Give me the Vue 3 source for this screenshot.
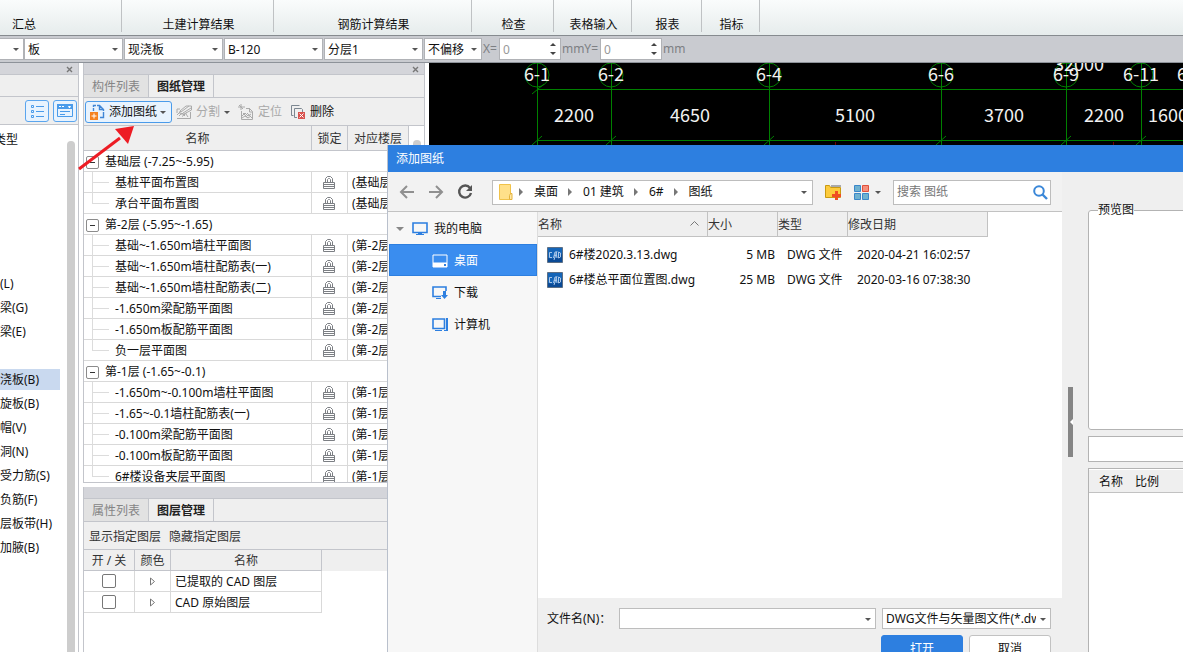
<script setup>
import { ref } from 'vue'

const ribbon = [
  { name: '汇总', size: 'w122' },
  { name: '土建计算结果', size: 'w152' },
  { name: '钢筋计算结果', size: 'w198' },
  { name: '检查', size: 'w82' },
  { name: '表格输入', size: 'w78' },
  { name: '报表', size: 'w70' },
  { name: '指标', size: 'w58' },
]
const combos = ['板', '现浇板', 'B-120', '分层1']

const members = [
  '', '', '', '', '', '(L)', '梁(G)', '梁(E)', '', '浇板(B)', '旋板(B)', '帽(V)',
  '洞(N)', '受力筋(S)', '负筋(F)', '层板带(H)', '加腋(B)',
]
const groups = [
  { title: '基础层 (-7.25~-5.95)', floor: '(基础层)', items: ['基桩平面布置图', '承台平面布置图'] },
  {
    title: '第-2层 (-5.95~-1.65)',
    floor: '(第-2层)',
    items: ['基础~-1.650m墙柱平面图', '基础~-1.650m墙柱配筋表(一)', '基础~-1.650m墙柱配筋表(二)', '-1.650m梁配筋平面图', '-1.650m板配筋平面图', '负一层平面图'],
  },
  {
    title: '第-1层 (-1.65~-0.1)',
    floor: '(第-1层)',
    items: ['-1.650m~-0.100m墙柱平面图', '-1.65~-0.1墙柱配筋表(一)', '-0.100m梁配筋平面图', '-0.100m板配筋平面图', '6#楼设备夹层平面图'],
  },
]
const layers = ['已提取的 CAD 图层', 'CAD 原始图层']
const axes = [
  { x: 108, label: '6-1' },
  { x: 182, label: '6-2' },
  { x: 340, label: '6-4' },
  { x: 512, label: '6-6' },
  { x: 637, label: '6-9' },
  { x: 712, label: '6-11' },
  { x: 766, label: '6-12' },
]
const spans = [
  { x: 145, v: '2200' }, { x: 261, v: '4650' }, { x: 426, v: '5100' },
  { x: 575, v: '3700' }, { x: 675, v: '2200' }, { x: 739, v: '1600' },
]
const crumbs = ['桌面', '01 建筑', '6#', '图纸']
const files = [
  { name: '6#楼2020.3.13.dwg', size: '5 MB', date: '2020-04-21 16:02:57' },
  { name: '6#楼总平面位置图.dwg', size: '25 MB', date: '2020-03-16 07:38:30' },
]
const fileName = ref('')
const search = ref('')
</script>

<template>
  <div class="app">
    <nav class="ribbon" aria-label="功能区">
      <div v-for="r in ribbon" :key="r.name" class="ribbon-group" :class="r.size">{{ r.name }}</div>
    </nav>

    <div class="options">
      <span class="combo stub"><select aria-label="楼层"><option></option></select></span>
      <span v-for="c in combos" :key="c" class="combo"><select :aria-label="c"><option>{{ c }}</option></select></span>
      <span class="combo small"><select aria-label="偏移"><option>不偏移</option></select></span>
      <label class="offset">X=<span class="spin"><input value="0" disabled /></span>mm</label>
      <label class="offset">Y=<span class="spin"><input value="0" disabled /></span>mm</label>
    </div>

    <main class="work">
      <aside class="members">
        <div class="dock-bar"><button class="close" aria-label="关闭">
          <svg width="7" height="7" viewBox="0 0 7 7"><path d="M1 1l5 5M6 1l-5 5" /></svg>
        </button></div>
        <div class="blank-bar"></div>
        <div class="view-bar">
          <button class="view-btn" aria-label="列表视图">
            <svg width="13" height="14" viewBox="0 0 13 14"><path class="bl" d="M.5 1.5h2v2h-2zM.5 6.500h2v2h-2zM.5 11.500h2v2h-2zM5 2.500h8M5 7.500h8M5 12.500h8" /></svg>
          </button>
          <button class="view-btn" aria-label="属性视图">
            <svg width="16" height="14" viewBox="0 0 16 14"><path class="bl" d="M.5.500h15v12h-15z" /><path class="bf" d="M0 0h16v5H0z" /><path d="M2 2h2v1H2zM5 2h2v1H5zM11 2h3l-1 2h-1z" fill="#fff" /><path class="bl" d="M3 7.500h10M3 10.500h5" /></svg>
          </button>
        </div>
        <div class="member-area">
          <ul class="member-list">
            <li class="type">类型</li>
            <li v-for="(m, i) in members" :key="i"><span :class="{ on: m === '浇板(B)' }">{{ m }}</span></li>
          </ul>
          <div class="thumb"></div>
        </div>
      </aside>

      <section class="center">
        <section class="dock drawings">
          <div class="dock-bar"><button class="close" aria-label="关闭">
            <svg width="7" height="7" viewBox="0 0 7 7"><path d="M1 1l5 5M6 1l-5 5" /></svg>
          </button></div>
          <div class="tabs"><button>构件列表</button><button class="active">图纸管理</button></div>
          <div class="tools">
            <button class="tool add">
              <svg width="16" height="16" viewBox="0 0 16 16"><path d="M3.500 7V4M3.500 3V1.500H6M7 1.500h2.500l4 4V7M9.500 1.500v4h4M13.500 8v5.500H10" fill="none" stroke="#3f86d6" stroke-width="1.400" /><path d="M0 8h8v8H0z" fill="#f58220" /><path d="M4 9.500v5M1.500 12h5" stroke="#fff" stroke-width="1" /></svg>
              添加图纸<i class="tri"></i>
            </button>
            <button class="tool dim">
              <svg width="16" height="16" viewBox="0 0 16 16"><path d="M4 5H1v4M1 14.500h13.500V8M3 12l3-3 3 3M1 11l4-4M6 12.500l5-4M12 13l-2-3M4 7l6-5h5.500v4L8 10H4zM5 8l8-6M7 9l8-5" /></svg>
              分割<i class="tri"></i>
            </button>
            <button class="tool dim locate">
              <svg width="16" height="16" viewBox="0 0 16 16"><path d="M3.500 7v8.500h11v-8l-3-3H8M11.500 4v4h3M0 3h7M3 0v6M1 1l4 4M4 12l3-3 3 3 3-2M4 14l3-2 3 2 3-2M5 9l5 5M9 9l5 5" /></svg>
              定位
            </button>
            <button class="tool">
              <svg width="15" height="15" viewBox="0 0 15 15"><path d="M2.500 10.500h-2v-10h8M6 12.500H3.500v-9h7l1 1V7" fill="none" stroke="#7c8791" /><path d="M7 7h7v7H7z" fill="#d9534f" /><path d="M8.500 8.500l4 4M12.500 8.500l-4 4" stroke="#fff" /></svg>
              删除
            </button>
          </div>
          <div class="scroll">
            <table class="grid">
              <thead><tr><th class="c-name">名称</th><th class="c-lock">锁定</th><th class="c-floor">对应楼层</th></tr></thead>
              <tbody v-for="g in groups" :key="g.title">
                <tr class="group"><td colspan="3"><span><button class="fold" aria-label="折叠"></button>{{ g.title }}</span></td></tr>
                <tr v-for="it in g.items" :key="it" class="leaf">
                  <td>{{ it }}</td>
                  <td class="lock"><svg width="12" height="13" viewBox="0 0 12 13"><path d="M2.500 6V2.500l2-2h3l2 2V6M4.500 6V3.500l1-1h1l1 1V6M.5 6.500h11v6H.5zM1 8.500h10M1 10.500h10" /></svg></td>
                  <td>{{ g.floor }}</td>
                </tr>
              </tbody>
            </table>
            <div class="rail"><div class="knob"></div></div>
          </div>
        </section>

        <section class="dock layers">
          <div class="dock-bar"></div>
          <div class="tabs"><button>属性列表</button><button class="active">图层管理</button></div>
          <div class="tools links"><button>显示指定图层</button><button>隐藏指定图层</button></div>
          <div class="layer-area">
            <table class="layer-table">
              <thead><tr><th class="l-on">开 / 关</th><th class="l-color">颜色</th><th class="l-name">名称</th></tr></thead>
              <tbody>
                <tr v-for="l in layers" :key="l">
                  <td><input type="checkbox" :aria-label="l" /></td>
                  <td><svg width="5" height="9" viewBox="0 0 5 9"><path d="M.5 1v7l4-3.500z" fill="none" stroke="#777" /></svg></td>
                  <td class="text">{{ l }}</td>
                </tr>
              </tbody>
            </table>
          </div>
        </section>
      </section>

      <section class="canvas">
        <svg width="100%" height="100%">
          <g fill="none" stroke="#008000">
            <path d="M108 26.500h1200M108 77.500h1200M103 31l12-10" />
            <g v-for="a in axes" :key="a.x">
              <path :d="`M${a.x + 0.5} 0v90M${a.x - 5} 82l10-9`" />
              <circle :cx="a.x" cy="12" r="12" />
            </g>
            <path d="M406.500 79v10M684.500 79v10" stroke="#700000" />
          </g>
          <g class="dims">
            <text v-for="a in axes" :key="a.label" :x="a.x" y="18">{{ a.label }}</text>
            <text v-for="s in spans" :key="s.x" :x="s.x" y="59">{{ s.v }}</text>
            <text x="650" y="8">32000</text>
          </g>
        </svg>
      </section>
    </main>

    <svg class="pointer" width="58" height="46" viewBox="0 0 58 46"><path d="M1 44l41-31" stroke="#ed1c24" stroke-width="3" /><path d="M56 1L37 4l13 15z" fill="#ed1c24" /></svg>

    <section class="dialog" role="dialog" aria-labelledby="dlg-title">
      <h1 id="dlg-title">添加图纸</h1>
      <div class="dialog-body">
        <div class="browser">
          <div class="path-bar">
            <button class="ico" aria-label="后退"><svg width="16" height="16" viewBox="0 0 16 16"><path d="M15 8H2M8 2L2 8l6 6" stroke="#909090" stroke-width="2" fill="none" /></svg></button>
            <button class="ico" aria-label="前进"><svg width="16" height="16" viewBox="0 0 16 16"><path d="M1 8h13M8 2l6 6-6 6" stroke="#909090" stroke-width="2" fill="none" /></svg></button>
            <button class="ico" aria-label="刷新"><svg width="16" height="16" viewBox="0 0 16 16"><path d="M13 4a6 6 0 1 0 1 5" stroke="#555" stroke-width="2.400" fill="none" /><path d="M15 1v6H9z" fill="#555" /></svg></button>
            <div class="crumbs">
              <svg width="14" height="17" viewBox="0 0 14 17"><path d="M.5.500h11v15H.5z" fill="#ffe08a" stroke="#f0c24a" /><path d="M11.500 9.500h1.500v6h-2.500v-4z" fill="#ffe9a8" stroke="#e5b23c" /></svg>
              <template v-for="c in crumbs" :key="c"><i class="right"></i><button>{{ c }}</button></template>
              <i class="tri end"></i>
            </div>
            <button class="ico folder" aria-label="新建文件夹"><svg width="17" height="16" viewBox="0 0 17 16"><path d="M6 1h10v2H6z" fill="#aaa" /><path d="M.5 1.500h4l1 2h10v10H.5z" fill="#fdcb3c" stroke="#c99a12" /><path d="M11.500 7v9M7 11.500h9" stroke="#f04e23" stroke-width="3" /></svg></button>
            <button class="ico tiles" aria-label="视图"><svg width="16" height="15" viewBox="0 0 16 15"><g fill="#6fb1cf" stroke="#3a87c9"><path d="M.5.500h6v6h-6zM.5 8.500h6v6h-6zM8.500 8.500h6v6h-6z" /></g><path d="M8.500.500h6v6h-6z" fill="#f58f7c" stroke="#e0503c" /></svg><i class="tri"></i></button>
            <label class="search">
              <input v-model="search" placeholder="搜索 图纸" aria-label="搜索" />
              <svg width="15" height="15" viewBox="0 0 15 15"><circle cx="6" cy="6" r="4.800" fill="none" stroke="#3a87d8" stroke-width="2" /><path d="M9.500 9.500l4.500 4.500" stroke="#3a87d8" stroke-width="2.400" /></svg>
            </label>
          </div>
          <div class="browser-main">
            <nav class="places" aria-label="位置">
              <button class="root"><i class="tri"></i><svg width="16" height="14" viewBox="0 0 16 14"><path class="pc" d="M1 1h14v9.500H1z" /><path class="pf" d="M4 12h8v1H4zM6 11h4v1H6z" /></svg>我的电脑</button>
              <button class="on"><svg width="16" height="14" viewBox="0 0 16 14"><path d="M1 1h14v12H1zM1 9h14" fill="none" stroke="#fff" /><path d="M1 9h14v4H1z" fill="#fff" /><path d="M12 10h2v2h-2z" fill="#2d7fe0" /></svg>桌面</button>
              <button><svg width="16" height="14" viewBox="0 0 16 14"><path class="pc" d="M9 10.500H1V1h13v4" /><path class="pf" d="M4 12h5v1H4zM11 5h3v4h2l-3.500 4L9 9h2z" /></svg>下载</button>
              <button><svg width="16" height="14" viewBox="0 0 16 14"><path class="pc" d="M1 1h11.500v9.500H1z" /><path class="pf" d="M3 12h7v1H3zM14 0h2v13h-4v-1h2z" /></svg>计算机</button>
            </nav>
            <div class="files">
              <div class="file-list">
                <table>
                  <thead><tr><th class="f-name">名称<svg width="9" height="5" viewBox="0 0 9 5"><path d="M.5 4.500l4-4 4 4" fill="none" stroke="#777" /></svg></th><th class="f-size">大小</th><th class="f-type">类型</th><th class="f-date">修改日期</th></tr></thead>
                  <tbody>
                    <tr v-for="f in files" :key="f.name">
                      <td><span class="file"><svg width="16" height="16" viewBox="0 0 16 16"><path d="M.5.500h15v15H.5z" fill="#1565b8" stroke="#5c6f85" /><path d="M1 11c5 2 10 0 14-4v8H1z" fill="#0a4a96" /><path d="M5 5.500H2.500v5H5M6.500 11l1.500-6h1l1 6M7 8.500h3M11.500 5v6l2-1V6zM10 4L7 13" fill="none" stroke="#a9c6e8" /></svg>{{ f.name }}</span></td>
                      <td class="num">{{ f.size }}</td><td class="pad">DWG 文件</td><td class="pad">{{ f.date }}</td>
                    </tr>
                  </tbody>
                </table>
              </div>
              <form class="foot" @submit.prevent>
                <label for="fname">文件名(N)：</label>
                <span class="combo name"><input id="fname" v-model="fileName" /></span>
                <span class="combo kind"><select aria-label="文件类型"><option>DWG文件与矢量图文件(*.dwg)</option></select></span>
                <div class="actions"><button class="primary">打开</button><button type="button">取消</button></div>
              </form>
            </div>
          </div>
        </div>
        <div class="splitter"><button aria-label="折叠预览"></button></div>
        <div class="preview">
          <fieldset><legend>预览图</legend></fieldset>
          <input aria-label="图纸名称" />
          <div class="sheet">
            <table><thead><tr><th>名称</th><th>比例</th></tr></thead></table>
          </div>
        </div>
      </div>
    </section>
  </div>
</template>

<style>
body {
  margin: 0;
}
</style>

<style scoped>
.app,
.app * {
  box-sizing: border-box;
}
.app {
  position: relative;
  display: flex;
  flex-direction: column;
  height: 100vh;
  overflow: hidden;
  background: #fff;
  color: #111;
  font: 12px/18px "Noto Sans", "Noto Sans CJK SC", sans-serif;
  white-space: nowrap;
}
button,
input,
select {
  font: inherit;
  color: inherit;
  margin: 0;
  padding: 0;
  border: 0;
  border-radius: 0;
  background: none;
  appearance: none;
  outline: 0;
}
table {
  border-collapse: separate;
  border-spacing: 0;
  table-layout: fixed;
}
th,
td {
  padding: 0;
  font-weight: 400;
  text-align: left;
}
svg {
  flex: none;
  display: block;
}
.tri {
  flex: none;
  border: 3px solid transparent;
  border-top-color: #555;
  border-bottom: 0;
}

/* ribbon and option bar */
.ribbon {
  flex: none;
  display: flex;
  height: 36px;
  background: linear-gradient(#fafcfc, #e6ecec);
  border-bottom: 1px solid #868b8f;
}
.ribbon-group {
  flex: none;
  height: 32px;
  padding: 16px 0 0 2px;
  border-right: 1px solid #bfc2c4;
  text-align: center;
}
.ribbon-group.w122 { width: 122px; padding-left: 12px; text-align: left; }
.w152 { width: 152px; }
.w198 { width: 198px; }
.w82 { width: 82px; }
.w78 { width: 78px; }
.w70 { width: 70px; }
.w58 { width: 58px; }
.options {
  flex: none;
  display: flex;
  align-items: center;
  height: 27px;
  background: #c9cbd0;
  border-bottom: 1px solid #8d9299;
}
.combo {
  position: relative;
  flex: none;
  display: block;
  width: 99px;
  height: 22px;
  margin-right: 1px;
  background: #fff;
  border: 1px solid #b0b2b6;
}
.combo.stub { width: 24px; margin-right: 0; border-left: 0; }
.combo.small { width: 58px; }
.combo select,
.combo input {
  display: block;
  width: 100%;
  height: 100%;
  padding: 1px 14px 0 3px;
}
.combo::after {
  content: "";
  position: absolute;
  right: 4px;
  top: 50%;
  margin-top: -1px;
  border: 3px solid transparent;
  border-top-color: #555;
  border-bottom: 0;
  pointer-events: none;
}
.offset {
  display: flex;
  align-items: center;
  color: #7d7f83;
}
.spin {
  position: relative;
  width: 62px;
  height: 22px;
  margin: 0 1px 0 2px;
  background: #fff;
  border: 1px solid #b0b2b6;
}
.spin input { width: 100%; height: 100%; padding: 1px 0 0 3px; color: #999; display: block; }
.spin::before,
.spin::after {
  content: "";
  position: absolute;
  right: 4px;
  border: 3px solid transparent;
}
.spin::before { top: 4px; border-top: 0; border-bottom-color: #444; }
.spin::after { bottom: 4px; border-bottom: 0; border-top-color: #444; }

/* docked panels */
.work {
  flex: 1;
  min-height: 0;
  display: flex;
}
.dock-bar {
  flex: none;
  height: 12px;
  display: flex;
  justify-content: flex-end;
  align-items: center;
  padding: 2px 5px 0 0;
  background: #d4d5da;
  border-bottom: 1px solid #c3c5cb;
}
.close path { stroke: #777; fill: none; stroke-width: 1.400; }
.members {
  flex: none;
  width: 79px;
  display: flex;
  flex-direction: column;
  border-right: 1px solid #c3c5cb;
}
.blank-bar {
  flex: none;
  height: 22px;
  background: #efefef;
  border-bottom: 1px solid #c3c5cb;
}
.view-bar {
  flex: none;
  display: flex;
  justify-content: flex-end;
  align-items: center;
  gap: 4px;
  height: 28px;
  padding-right: 1px;
  background: #efefef;
  border-bottom: 1px solid #c3c5cb;
}
.view-btn {
  display: grid;
  place-items: center;
  width: 24px;
  height: 22px;
  border: 1px solid #5aa5ee;
  border-radius: 3px;
  background: #e8f3fe;
}
.bl { fill: none; stroke: #4a9bea; }
.bf { fill: #4a9bea; }
.member-area {
  flex: 1;
  display: flex;
  justify-content: space-between;
  min-height: 0;
  overflow: hidden;
}
.member-list { list-style: none; margin: 2px 0 0; padding: 0; width: 60px; }
.member-list li { height: 24px; padding-top: 2px; }
.member-list .type { margin-left: -6px; padding-top: 4px; }
.member-list span { display: block; height: 21px; line-height: 21px; }
.member-list .on { background: #c9d9ef; }
.thumb { width: 8px; margin: 16px 3px 0 0; background: #cdcdcd; border-radius: 4px 4px 0 0; }

.center {
  flex: none;
  width: 342px;
  margin: 0 4px;
  display: flex;
  flex-direction: column;
  gap: 4px;
}
.dock {
  display: flex;
  flex-direction: column;
  border: solid #c3c5cb;
  border-width: 0 1px;
  overflow: hidden;
}
.drawings { flex: 0 0 420px; border-bottom-width: 1px; }
.layers { flex: 1; }
.tabs {
  flex: none;
  display: flex;
  height: 23px;
  background: #efefef;
  border-bottom: 1px solid #c3c5cb;
}
.tabs button {
  width: 65px;
  padding-top: 2px;
  color: #858585;
  background: #e2e2e2;
  border-right: 1px solid #c3c5cb;
}
.tabs .active { color: #222; background: #efefef; font-weight: 600; }
.tools {
  flex: none;
  display: flex;
  align-items: center;
  height: 28px;
  padding: 1px 0 0 1px;
  background: #efefef;
  border-bottom: 1px solid #c3c5cb;
}
.tool {
  flex: none;
  display: flex;
  align-items: center;
  gap: 4px;
  height: 22px;
  margin-right: 8px;
}
.tool.add {
  width: 87px;
  gap: 3px;
  padding-left: 4px;
  margin-right: 4px;
  border: 1px solid #4a9bea;
  border-radius: 3px;
  background: #e8f3fe;
}
.tool.dim { color: #a9a9a9; }
.tool.dim path { fill: none; stroke: #aaa; }
.tool.locate { margin-right: 9px; }
.links { gap: 8px; padding: 2px 0 0 5px; color: #333; }
.scroll { flex: 1; display: flex; min-height: 0; overflow: hidden; }
.grid { flex: none; width: 325px; }
.grid th {
  height: 25px;
  padding-top: 2px;
  background: #efefef;
  border-right: 1px solid #c3c5cb;
  border-bottom: 1px solid #c3c5cb;
  text-align: center;
  color: #333;
}
.grid td,
.layer-table td {
  height: 21px;
  padding-top: 2px;
  line-height: 18px;
  border-right: 1px solid #d9d9d9;
  border-bottom: 1px solid #d9d9d9;
}
.c-name { width: 228px; }
.c-lock { width: 36px; }
.c-floor { width: 61px; }
.group span { display: flex; align-items: center; gap: 6px; padding-left: 2px; }
.fold {
  width: 13px;
  height: 13px;
  border: 1px solid #8b8b8b;
  border-radius: 2px;
  display: grid;
  place-items: center;
}
.fold::after { content: ""; width: 5px; height: 1px; background: #333; }
.leaf td:first-child {
  position: relative;
  padding-left: 31px;
}
.leaf td:first-child::before {
  content: "";
  position: absolute;
  left: 8px;
  top: 0;
  bottom: -1px;
  border-left: 1px solid #dcdcdc;
}
.leaf:last-child td:first-child::before { bottom: 10px; }
.leaf td:first-child::after {
  content: "";
  position: absolute;
  left: 8px;
  top: 10px;
  width: 17px;
  border-top: 1px solid #dcdcdc;
}
.leaf td:last-child { padding-left: 4px; }
.grid .lock { padding: 0 1px 0 0; }
.lock svg { margin: 0 auto; }
.lock path { fill: none; stroke: #7c7f84; }
.rail { flex: 1; padding: 14px 3px 0 4px; }
.knob { height: 300px; background: #cdcdcd; border-radius: 4px; }

.layer-area {
  flex: 1;
  background: linear-gradient(#efefef 21px, #fff 21px);
}
.layer-table { width: 238px; background: #fff; }
.layer-table th {
  height: 21px;
  padding-top: 2px;
  background: #efefef;
  border-right: 1px solid #c3c5cb;
  border-bottom: 1px solid #c3c5cb;
  text-align: center;
  color: #333;
}
.layer-table td { padding-top: 0; }
.layer-table td.text { padding: 1px 0 0 4px; }
.layer-table svg { margin: 0 auto; }
.layer-table input {
  display: block;
  width: 14px;
  height: 14px;
  margin: 0 auto;
  border: 1px solid #777;
  border-radius: 2px;
}
.l-on { width: 51px; }
.l-color { width: 36px; }
.l-name { width: 151px; }

.canvas { flex: 1; min-width: 0; background: #000; overflow: hidden; }
.dims {
  fill: #f2f2f2;
  font: 18px "Noto Sans CJK SC", sans-serif;
  text-anchor: middle;
}
.pointer {
  position: absolute;
  left: 78px;
  top: 125px;
  fill: none;
}

/* file dialog */
.dialog {
  position: absolute;
  left: 387px;
  right: -20px;
  top: 145px;
  bottom: -20px;
  display: flex;
  flex-direction: column;
  background: #efefef;
  border-left: 1px solid #b9c0cc;
}
.dialog h1 {
  flex: none;
  margin: 0;
  padding-left: 8px;
  font-size: 12px;
  font-weight: 400;
  line-height: 27px;
  color: #fff;
  background: #2d7fe0;
}
.dialog-body { flex: 1; min-height: 0; display: flex; }
.browser { flex: 1; min-width: 0; display: flex; flex-direction: column; }
.path-bar {
  flex: none;
  display: flex;
  align-items: center;
  height: 40px;
  padding: 1px 11px 0 11px;
  background: #f2f2f2;
  border-bottom: 1px solid #c2c2c2;
}
.ico { flex: none; display: flex; align-items: center; margin-right: 13px; }
.crumbs {
  flex: 1;
  display: flex;
  align-items: center;
  height: 25px;
  margin: 0 12px 0 6px;
  padding: 0 5px 0 6px;
  background: #fff;
  border: 1px solid #bdbdbd;
}
.right {
  flex: none;
  border: 4px solid transparent;
  border-left-color: #777;
  border-right: 0;
  margin: 0 11px 0 10px;
}
.crumbs svg + .right { margin-left: 6px; }
.end { margin-left: auto; }
.tiles { gap: 5px; margin-right: 12px; }
.folder { margin-right: 12px; }
.search {
  flex: none;
  display: flex;
  align-items: center;
  width: 158px;
  height: 25px;
  padding: 0 2px 0 3px;
  background: #fff;
  border: 1px solid #bdbdbd;
}
.search input { flex: 1; min-width: 0; }
.search input::placeholder { color: #777; opacity: 1; }
.browser-main { flex: 1; display: flex; min-height: 0; }
.places {
  flex: none;
  width: 150px;
  padding-right: 1px;
  background: #f7f7f7;
  border-right: 1px solid #ddd;
}
.places button {
  display: flex;
  align-items: center;
  gap: 6px;
  width: 100%;
  height: 32px;
  margin-left: 1px;
  padding: 2px 0 0 43px;
}
.places .root { padding-left: 7px; gap: 6px; }
.root .tri { border-width: 4px 4px 0; border-top-color: #888; margin-right: 2px; }
.places .on { color: #fff; background: #3a8def; border: 1px solid #2d7fe0; padding-left: 42px; }
.pc { fill: none; stroke: #2d7fe0; stroke-width: 1.600; }
.pf { fill: #2d7fe0; }
.files { flex: 1; min-width: 0; display: flex; flex-direction: column; }
.file-list { flex: 1; background: #fff; }
.file-list table { width: 450px; }
.file-list th {
  height: 25px;
  padding-top: 2px;
  color: #333;
  background: #efefef;
  border-right: 1px solid #c2c2c2;
  border-bottom: 1px solid #c2c2c2;
}
.file-list tbody::before { content: ""; display: block; height: 5px; }
.file-list td { height: 25px; }
.f-name { width: 170px; }
.f-name svg { float: right; margin: 5px 8px 0 0; }
.f-size, .f-type { width: 70px; }
.f-date { width: 140px; }
.file { display: flex; align-items: center; gap: 6px; padding-left: 9px; }
.num { padding-right: 3px; text-align: right; }
.pad { padding-left: 9px; }
.foot {
  flex: none;
  display: flex;
  flex-wrap: wrap;
  align-items: center;
  row-gap: 6px;
  height: 74px;
  padding: 10px 11px 0 9px;
  align-content: flex-start;
}
.foot label { width: 72px; }
.foot .combo { height: 21px; margin: 0; border-color: #bdbdbd; }
.foot .name { flex: 1; margin-right: 6px; }
.foot .kind { width: 169px; }
.actions { width: 100%; display: flex; justify-content: flex-end; gap: 6px; }
.actions button {
  width: 82px;
  height: 25px;
  padding-top: 2px;
  border: 1px solid #c2c2c2;
  border-radius: 3px;
  background: #fff;
}
.actions .primary { color: #fff; background: #2d7fe0; border-color: #2d7fe0; }

.splitter { flex: none; width: 26px; padding: 215px 0 0 6px; }
.splitter button {
  display: grid;
  place-items: center end;
  width: 5px;
  height: 70px;
  background: #858585;
}
.splitter button::after {
  content: "";
  border: 3px solid transparent;
  border-right-color: #fff;
  border-left: 0;
}
.preview {
  flex: none;
  width: 115px;
  display: flex;
  flex-direction: column;
  gap: 6px;
  padding-top: 29px;
}
.preview fieldset {
  height: 229px;
  min-width: 0;
  margin: 0;
  padding: 0 0 0 9px;
  border: 1px solid #b3b3b3;
  border-radius: 3px;
  background: #fff;
}
.preview legend { padding: 0; line-height: 18px; }
.preview > input { flex: none; width: 100%; height: 26px; background: #fff; border: 1px solid #b3b3b3; }
.sheet { flex: 1; background: #fff; border: 1px solid #b3b3b3; padding-top: 1px; }
.sheet table { width: 100%; background: #efefef; border-bottom: 1px solid #c2c2c2; }
.sheet th { height: 22px; padding: 2px 0 0 10px; }
.sheet th:first-child { width: 36px; }
</style>
